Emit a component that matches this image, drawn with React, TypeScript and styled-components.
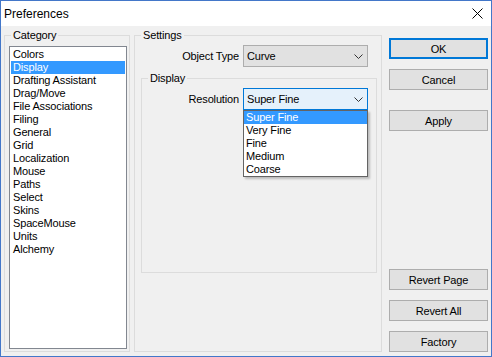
import React from 'react';
import styled, { createGlobalStyle } from 'styled-components';

const GlobalStyle = createGlobalStyle`
  html, body {
    margin: 0;
    padding: 0;
    background: #f0f0f0;
  }
  body {
    font-family: 'Liberation Sans', Arial, sans-serif;
    font-size: 11px;
    letter-spacing: -0.15px;
    color: #000;
  }
`;

const Window = styled.div`
  width: 492px;
  height: 357px;
  box-sizing: border-box;
  border: 1px solid #4377c9;
  background: #f0f0f0;
  display: flex;
  flex-direction: column;
`;

const TitleBar = styled.div`
  height: 25px;
  flex: none;
  background: #fff;
  display: flex;
  align-items: center;
  justify-content: space-between;
  padding: 0 8px 0 3px;
`;

const Title = styled.span`
  font-size: 12px;
  letter-spacing: 0;
  color: #000;
`;

const Content = styled.div`
  flex: 1;
  display: flex;
  gap: 4px;
  padding: 9px 3px 4px 3px;
  min-height: 0;
`;

const Group = styled.div<{ $width?: number; $height?: number; $top?: number }>`
  position: relative;
  box-sizing: border-box;
  border: 1px solid #dcdcdc;
  display: flex;
  flex-direction: column;
  margin-top: ${({ $top }) => $top ?? 0}px;
  ${({ $width }) => ($width ? `width: ${$width}px; flex: none;` : '')}
  ${({ $height }) => ($height ? `height: ${$height}px;` : '')}
`;

const Caption = styled.span`
  position: absolute;
  top: -7px;
  left: 6px;
  padding: 0 2px;
  line-height: 13px;
  background: #f0f0f0;
`;

const CategoryBody = styled.div`
  flex: 1;
  display: flex;
  padding: 10px 2px 2px 4px;
`;

const ListBox = styled.div`
  flex: 1;
  border: 1px solid #828790;
  background: #fff;
  padding: 1px 1px;
`;

const ListItem = styled.div<{ $selected?: boolean }>`
  height: 13px;
  line-height: 13px;
  padding-left: 2px;
  white-space: nowrap;
  background: ${({ $selected }) => ($selected ? '#3399ff' : 'transparent')};
  color: ${({ $selected }) => ($selected ? '#fff' : '#000')};
`;

const SettingsBody = styled.div`
  flex: 1;
  display: flex;
  flex-direction: column;
  padding: 9px 4px 2px 6px;
`;

const DisplayBody = styled.div`
  display: flex;
  flex-direction: column;
  padding: 9px 0 0 0;
`;

const FieldRow = styled.div`
  display: flex;
  align-items: center;
  gap: 4px;
`;

const FieldLabel = styled.span<{ $width: number }>`
  width: ${({ $width }) => $width}px;
  text-align: right;
  white-space: nowrap;
`;

const ComboWrap = styled.div`
  position: relative;
`;

const Combo = styled.div<{ $open?: boolean }>`
  width: 125px;
  height: 22px;
  box-sizing: border-box;
  border: 1px solid ${({ $open }) => ($open ? '#0078d7' : '#adadad')};
  background: ${({ $open }) => ($open ? '#e5f1fb' : '#e1e1e1')};
  display: flex;
  align-items: center;
  justify-content: space-between;
  padding: 0 4px 0 3px;
`;

const DropList = styled.div`
  position: absolute;
  top: 100%;
  left: 0;
  width: 125px;
  box-sizing: border-box;
  border: 1px solid #646464;
  background: #fff;
  box-shadow: 2px 2px 2px rgba(0, 0, 0, 0.22);
  z-index: 2;
`;

const ButtonColumn = styled.div`
  width: 99px;
  flex: none;
  margin-left: 3px;
  padding-top: 3px;
  display: flex;
  flex-direction: column;
  justify-content: space-between;
`;

const ButtonStack = styled.div`
  display: flex;
  flex-direction: column;
  gap: 10px;
`;

const Button = styled.div<{ $default?: boolean; $spaced?: boolean }>`
  height: 21px;
  box-sizing: border-box;
  border: ${({ $default }) => ($default ? '2px solid #0078d7' : '1px solid #adadad')};
  background: #e1e1e1;
  display: flex;
  align-items: center;
  justify-content: center;
  margin-top: ${({ $spaced }) => ($spaced ? '10px' : '0')};
`;

const Chevron = () => (
  <svg width="9" height="5" viewBox="0 0 9 5">
    <path d="M0.5 0.5 L4.5 4.5 L8.5 0.5" fill="none" stroke="#333" strokeWidth="1" />
  </svg>
);

const CloseIcon = () => (
  <svg width="11" height="11" viewBox="0 0 11 11">
    <path d="M0.5 0.5 L10.5 10.5 M10.5 0.5 L0.5 10.5" stroke="#000" strokeWidth="1" />
  </svg>
);

const categories = [
  'Colors', 'Display', 'Drafting Assistant', 'Drag/Move', 'File Associations', 'Filing',
  'General', 'Grid', 'Localization', 'Mouse', 'Paths', 'Select', 'Skins', 'SpaceMouse',
  'Units', 'Alchemy',
];

const resolutions = ['Super Fine', 'Very Fine', 'Fine', 'Medium', 'Coarse'];

export default function App(): JSX.Element {
  return (
    <>
      <GlobalStyle />
      <Window>
        <TitleBar>
          <Title>Preferences</Title>
          <CloseIcon />
        </TitleBar>
        <Content>
          <Group $width={126}>
            <Caption>Category</Caption>
            <CategoryBody>
              <ListBox>
                {categories.map((c) => (
                  <ListItem key={c} $selected={c === 'Display'}>{c}</ListItem>
                ))}
              </ListBox>
            </CategoryBody>
          </Group>
          <Group $width={248}>
            <Caption>Settings</Caption>
            <SettingsBody>
              <FieldRow>
                <FieldLabel $width={98}>Object Type</FieldLabel>
                <ComboWrap>
                  <Combo>
                    <span>Curve</span>
                    <Chevron />
                  </Combo>
                </ComboWrap>
              </FieldRow>
              <Group $height={195} $top={11}>
                <Caption>Display</Caption>
                <DisplayBody>
                  <FieldRow>
                    <FieldLabel $width={97}>Resolution</FieldLabel>
                    <ComboWrap>
                      <Combo $open>
                        <span>Super Fine</span>
                        <Chevron />
                      </Combo>
                      <DropList>
                        {resolutions.map((r) => (
                          <ListItem key={r} $selected={r === 'Super Fine'}>{r}</ListItem>
                        ))}
                      </DropList>
                    </ComboWrap>
                  </FieldRow>
                </DisplayBody>
              </Group>
            </SettingsBody>
          </Group>
          <ButtonColumn>
            <ButtonStack>
              <Button $default>OK</Button>
              <Button>Cancel</Button>
              <Button $spaced>Apply</Button>
            </ButtonStack>
            <ButtonStack>
              <Button>Revert Page</Button>
              <Button>Revert All</Button>
              <Button>Factory</Button>
            </ButtonStack>
          </ButtonColumn>
        </Content>
      </Window>
    </>
  );
}
